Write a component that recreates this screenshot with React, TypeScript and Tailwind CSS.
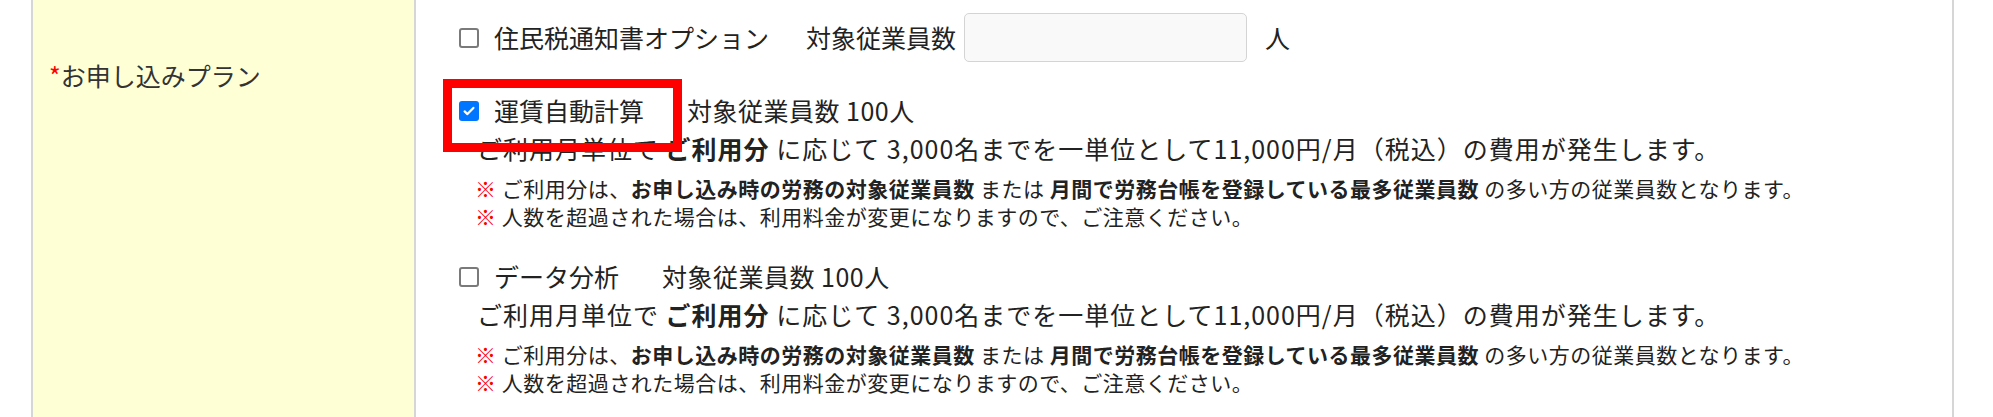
import React from 'react';

const plans = [
  { name: 'データ分析' },
];

function Box({ checked }: { checked?: boolean }) {
  if (checked) {
    return (
      <span className="w-5 h-5 shrink-0 rounded-[3px] bg-[#0075ff] flex items-center justify-center">
        <svg viewBox="0 0 16 16" className="w-[14px] h-[14px]" fill="none" stroke="white" strokeWidth="2.6" strokeLinecap="round" strokeLinejoin="round">
          <path d="M3 8.5l3.2 3L13 4.5" />
        </svg>
      </span>
    );
  }
  return <span className="w-5 h-5 shrink-0 rounded-[3px] border-2 border-[#7a7a7a] bg-white" />;
}

function Notes() {
  return (
    <>
      <p className="mt-2 pl-[16px] text-[21px] leading-[28px] tracking-[0.5px]">
        <span className="text-[#ff0000] font-bold">※</span> ご利用分は、<b>お申し込み時の労務の対象従業員数</b> または <b>月間で労務台帳を登録している最多従業員数</b> の多い方の従業員数となります。
      </p>
      <p className="pl-[16px] text-[21px] leading-[28px] tracking-[0.5px]">
        <span className="text-[#ff0000] font-bold">※</span> 人数を超過された場合は、利用料金が変更になりますので、ご注意ください。
      </p>
    </>
  );
}

function PlanBlock({ name, checked, className }: { name: string; checked?: boolean; className?: string }) {
  return (
    <div className={className}>
      <div className="flex items-center h-9">
        <Box checked={checked} />
        <span className="ml-[15px]">{name}</span>
        <span className="ml-[43px] tracking-[0.5px]">対象従業員数 100人</span>
      </div>
      <p className="mt-px pl-[18px] leading-9 tracking-[1px]">
        ご利用月単位で <b>ご利用分</b> に応じて 3,000名までを一単位として11,000円/月（税込）の費用が発生します。
      </p>
      <Notes />
    </div>
  );
}

export default function App() {
  return (
    <div className="w-[1993px] h-[417px] bg-white flex overflow-hidden font-['Noto_Sans_CJK_JP',sans-serif] text-[25px] text-[#222]">
      <div className="w-[31px] shrink-0" />
      <div className="w-[385px] shrink-0 bg-[#ffffd6] border-l-2 border-r-2 border-[#d6d6d6] pl-[16px] pt-[57px]">
        <p className="leading-9 text-[#333]">
          <span className="text-[#ff0000]">*</span>お申し込みプラン
        </p>
      </div>
      <div className="relative w-[1538px] shrink-0 border-r-2 border-[#d6d6d6] pl-[43px] pt-[13px]">
        <div className="flex items-center h-[49px]">
          <Box />
          <span className="ml-[15px]">住民税通知書オプション</span>
          <span className="ml-[37px]">対象従業員数</span>
          <input
            type="text"
            className="ml-2 w-[283px] h-[49px] rounded-[5px] border border-[#d4d4d4] bg-[#f9f9f9] outline-none"
          />
          <span className="ml-[18px]">人</span>
        </div>

        <PlanBlock name="運賃自動計算" checked className="mt-[31px]" />
        {plans.map((p) => (
          <PlanBlock key={p.name} name={p.name} className="mt-[29px]" />
        ))}

        {/* highlight */}
        <div className="absolute left-[27px] top-[79px] w-[239px] h-[73px] border-[9px] border-[#ff0000]" />
      </div>
    </div>
  );
}
